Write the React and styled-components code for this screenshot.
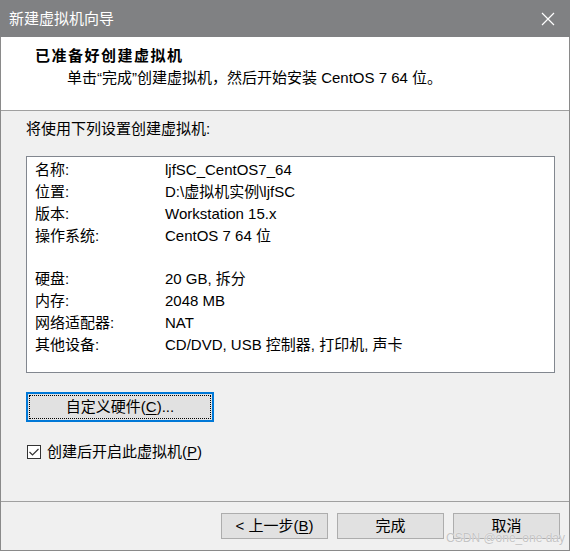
import React from 'react';
import styled, { createGlobalStyle } from 'styled-components';

const GlobalStyle = createGlobalStyle`
  html, body {
    margin: 0;
    padding: 0;
    background: #ffffff;
  }
  * {
    box-sizing: border-box;
  }
`;

const uiFont = `"Liberation Sans", "Noto Sans CJK SC", sans-serif`;

const Window = styled.div`
  position: relative;
  width: 570px;
  height: 551px;
  display: flex;
  flex-direction: column;
  border: 1px solid #8a8a8a;
  border-top: none;
  background: #f0f0f0;
  font-family: ${uiFont};
  font-size: 15px;
  color: #000;
`;

const TitleBar = styled.div`
  height: 37px;
  margin: 0 -1px;
  display: flex;
  align-items: center;
  justify-content: space-between;
  padding: 0 9px 0 9px;
  background: #808183;
  color: #ffffff;
  font-size: 15px;
  line-height: 20px;
`;

const CloseButton = styled.span`
  display: flex;
  width: 14px;
  height: 14px;
  margin-right: 6px;
`;

const Header = styled.div`
  height: 74px;
  background: #ffffff;
  border-bottom: 1px solid #a0a0a0;
  padding: 9px 0 0 34px;
`;

const Heading = styled.div`
  font-weight: bold;
  font-size: 15px;
  letter-spacing: 1.5px;
  line-height: 20px;
`;

const SubHeading = styled.div`
  margin-top: 2px;
  padding-left: 32px;
  line-height: 20px;
`;

const Body = styled.div`
  height: 391px;
  border-bottom: 1px solid #a0a0a0;
  padding: 8px 14px 0 25px;
  display: flex;
  flex-direction: column;
`;

const Intro = styled.div`
  line-height: 20px;
`;

const InfoBox = styled.div`
  margin-top: 17px;
  height: 217px;
  background: #ffffff;
  border: 1px solid #82878f;
  padding: 2px 8px 0 8px;
`;

const InfoRow = styled.div`
  display: grid;
  grid-template-columns: 130px 1fr;
  height: 21.9px;
  line-height: 22px;
  white-space: nowrap;
`;

const PushButton = styled.button`
  font-family: ${uiFont};
  font-size: 15px;
  line-height: 20px;
  color: #000;
  background: #e1e1e1;
  border: 1px solid #adadad;
  padding: 0;
  display: flex;
  align-items: center;
  justify-content: center;
  white-space: pre;
  width: ${(p) => p.$width || 107}px;
  height: ${(p) => p.$height || 26}px;
  ${(p) =>
    p.$focused &&
    `
    border: 2px solid #0078d7;
    outline: 1px dotted #000;
    outline-offset: -4px;
  `}
`;

const CustomizeRow = styled.div`
  margin-top: 19px;
`;

const CheckRow = styled.label`
  margin-top: 20px;
  display: flex;
  align-items: center;
  gap: 6px;
  line-height: 20px;
  padding-left: 1px;
`;

const CheckBox = styled.span`
  width: 14px;
  height: 14px;
  border: 1px solid #333333;
  background: #ffffff;
  display: flex;
  align-items: center;
  justify-content: center;
`;

const Footer = styled.div`
  flex: 1;
  display: flex;
  justify-content: flex-end;
  gap: 9px;
  padding: 11px 9px 0 0;
`;

const Mnemonic = styled.u`
  text-underline-offset: 2px;
`;

const Watermark = styled.div`
  position: absolute;
  right: 4px;
  bottom: 5px;
  font-family: "Liberation Sans", sans-serif;
  font-size: 12px;
  line-height: 14px;
  color: #c4c4c4;
  text-shadow: 0 0 1px #ffffff;
  pointer-events: none;
`;

const rows = [
  ['名称:', 'ljfSC_CentOS7_64'],
  ['位置:', 'D:\\虚拟机实例\\ljfSC'],
  ['版本:', 'Workstation 15.x'],
  ['操作系统:', 'CentOS 7 64 位'],
  ['', ''],
  ['硬盘:', '20 GB, 拆分'],
  ['内存:', '2048 MB'],
  ['网络适配器:', 'NAT'],
  ['其他设备:', 'CD/DVD, USB 控制器, 打印机, 声卡'],
];

export default function App() {
  return (
    <>
      <GlobalStyle />
      <Window>
        <TitleBar>
          <span>新建虚拟机向导</span>
          <CloseButton>
            <svg width="14" height="14" viewBox="0 0 14 14">
              <path d="M1 1 L13 13 M13 1 L1 13" stroke="#ffffff" strokeWidth="1.2" />
            </svg>
          </CloseButton>
        </TitleBar>
        <Header>
          <Heading>已准备好创建虚拟机</Heading>
          <SubHeading>单击“完成”创建虚拟机，然后开始安装 CentOS 7 64 位。</SubHeading>
        </Header>
        <Body>
          <Intro>将使用下列设置创建虚拟机:</Intro>
          <InfoBox>
            {rows.map(([label, value], i) => (
              <InfoRow key={i}>
                <span>{label}</span>
                <span>{value}</span>
              </InfoRow>
            ))}
          </InfoBox>
          <CustomizeRow>
            <PushButton $width={188} $height={30} $focused>
              自定义硬件(<Mnemonic>C</Mnemonic>)...
            </PushButton>
          </CustomizeRow>
          <CheckRow>
            <CheckBox>
              <svg width="10" height="8" viewBox="0 0 10 8">
                <path d="M0.5 4 L3.5 7 L9.5 1" fill="none" stroke="#333" strokeWidth="1.2" />
              </svg>
            </CheckBox>
            <span>
              创建后开启此虚拟机(<Mnemonic>P</Mnemonic>)
            </span>
          </CheckRow>
        </Body>
        <Footer>
          <PushButton>
            {'< 上一步('}
            <Mnemonic>B</Mnemonic>)
          </PushButton>
          <PushButton>完成</PushButton>
          <PushButton>取消</PushButton>
        </Footer>
        <Watermark>CSDN @one_one day</Watermark>
      </Window>
    </>
  );
}
